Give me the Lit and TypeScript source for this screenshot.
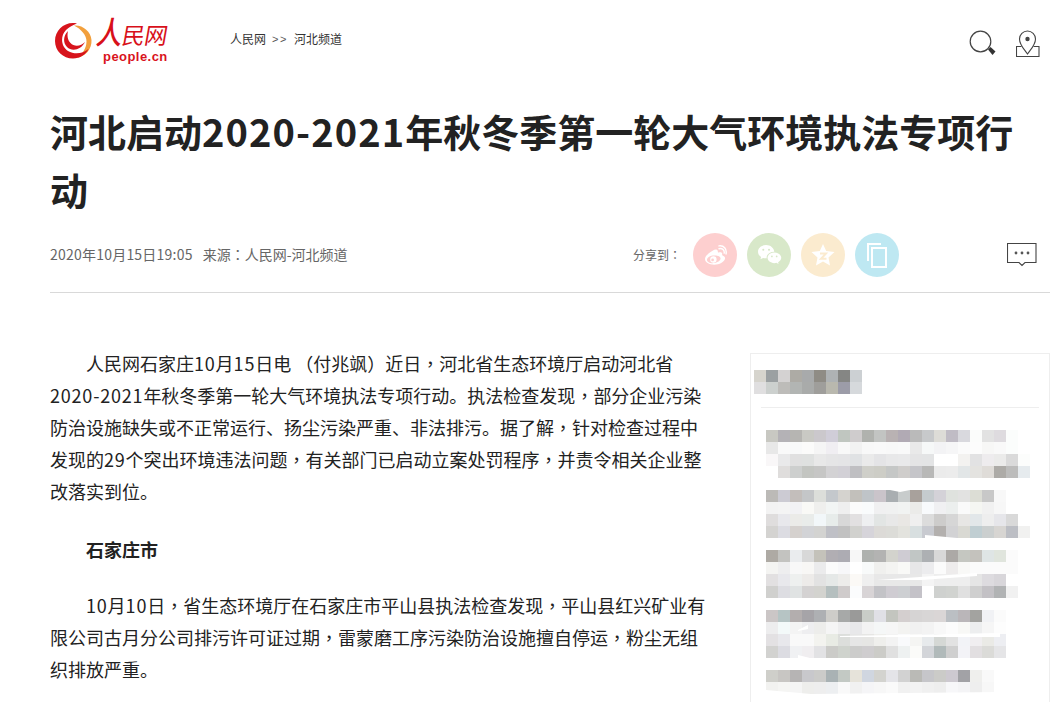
import { LitElement, html, css } from "lit";
import { customElement } from "lit/decorators.js";

const SIDE_TITLE = [
  "d6d4cd 9ba0a2 d4d2d2 adaba5 a8aaab 8f8c85 aeb2b4 858684 ccd0d3",
  "e0dfe0 ccd0ce bdbcb9 b2b5b3 a9abaa 9f9e9b b9b8ae 9c9ca8 d6d9dc",
];
const SIDE_ROWS: string[][] = [
  [
    "c8c8c2 b4b2b6 b6b5b2 c9c9c4 cbc8cc d0cdd8 c0c6c0 cfcccd b0b2ae c2c4c2 b9b2b3 b1aab4 bababa c7c9cb dddcd7 c0bcc5 d9d9de fbfcfb e2e2e2 dedbdf fbfdfc",
    "e8e8e8 f9f9f9 f8f9f9 fbfbfa f5f5f5 f0eef2 f8f8f8 f2f2f2 f8f8f8 f9f9f9 f8f8f8 f9f9f9 e9e9e9 f6f8f8 f3f3f5 f6f6f7 fbfbfb fcfcfc f7f7f6 f9f9f9 fbfdfc",
    "f9f7f8 e9e9ea e0e0e0 dfe1e0 e8e8e8 e5e5e6 e4e4e6 e0e2e4 eaeaea e4e4e6 e8e8e9 e9e9ea e4e4e5 e3e4e5 ffffff ffffff f3f2f0 e2e2e3 eeecee ebebea dadada fcfdfc",
    "ffffff dfdddc cdcfce c3c5c1 c6c6c5 d3d2d4 d2d0d6 bfbfc2 cfcfc9 cdcdc6 c5c7c6 cfcdcb c5c5c9 b8b8b7 ebebeb ececec e2e6e7 e4e3e0 dfdcd8 adaba7 bcbcbb e6ebee",
  ],
  [
    "bcbab7 cccbd3 c3bebb c4c6c8 dcdeda c4c8cc d5d3cf c2c0bb bfc4c8 cac4ca a9aeb1 c8cccc a8a19c c5cbce d4d2d8 dfe2de e2e2e1 dcddd5 c8c8c8 f8f8f8",
    "f3f3f3 f4f4f4 f2f2f4 f9f9f6 efefed f2f5f4 efefef fbfbfb f9fbfc f0f0f1 f0f1f1 f1f3f2 ebebe9 f8fafc f0f0f2 ecefee fafafa f5f6f2 f1f1f1 f7f7f7",
    "dfdddd e8e8ec ebebe8 e9ecea f2f7f9 e7ecea d8d8d8 e2e0e1 eeeff1 e2e5e4 e8e8e8 e9e7e4 efefef dcdcdc cdcccb d6d6d6 e7e6e4 e2e7e9 eeeeee e6e6ea d9d9d9",
    "d4d3d1 dcdce2 d5d1ce d2d3d6 d3d3d1 bfc0c6 c1c1c1 d1d1ce d6d4da dcdad7 dcdcd8 e3e3de d8dfe0 c8cad0 b3b0ae d2d2d4 d9d9d3 c0ced2 cbcfcf d7d5d2 bcbec4 f1f1f0",
  ],
  [
    "aeaaa4 c3c3c0 eaecee d8d8d8 c4c2ba b1aeb3 adacb3 f7f7f7 aeb1ae b3b3b2 d3d3cd cfccd3 c1c6c5 adb0b3 d8d8d8 aca9a6 c5c7c1 c4c2bd dfe5e5 e0e5dd fbfbfb",
    "f4f4f2 eeeeef f8f8f8 f8f7f5 ebebec fbfbfb f7f7f9 ffffff f8fafa f0f0ee f4f4f2 f9f9f7 e7e7e8 ececee fbfbfb eeecec f9f9f7 fbfbfb fbfbfb fbfbfb fbfbfb",
    "e2e0e1 e8e8ec eef0ef edebe9 e2e2e2 e5e8e7 edecea fbf9f6 efefef e8e8e8 e8e8e8 e8e8e8 e8e8e8 f4f4f4 eeeeee eeeeee eeeeee e5e5e5 dddbdf d8d6da ffffff",
    "d0d0ce dddde2 e0e3e3 d4d2d2 d3d3cf b5bfbf cfcbcb fbfcfd d8d4d6 c3c3c7 cfccd2 cdcfd2 c4c2c8 ffffff cfd1cf d1d3d0 e0e0e0 cfcfcf c3c1c5 b1b3b4 f1f1f1",
  ],
  [
    "cbc6c6 b6c4c4 b3aeae a6a4a8 aeb0b3 cecdc9 a7a9a8 9a9a99 c9cdc8 e0e0e6 c3c5bf d4cfcf d6d4d4 d8d6d6 dad6d6 bbbfc3 bab6b9 a3a3a0 f1f2f5 fbfbfb",
    "ededee f3f9f9 f4f4f4 eeeef0 ededeb f5f5f5 ededee e8e8ea f3f3f3 f5f7f7 f6f6f6 f3f3f1 f1f1f1 f3f3f3 f8f8f8 fcfcfc f8f8f6 edeeef f6f6f6 fdfdfd",
    "e3e1e3 e8e8ec f9f9f9 f9f9f9 f3f3ef e8ebe4 dcdedb e6e6e6 e6e6e4 efefec f3f3f3 f9fafc f5f5f3 e7eaec d5d8d5 e2e2e2 f2f3f7 f0eef0 eaeae6 edeef2",
    "d2d2d0 dcdce2 f0f1f3 f0eef0 e2e2e4 cbcbc8 cfd3cd cccccb cfcdcf ccccc8 e0e0e0 eef1f1 fbfbf9 d3d5d9 b1baba cfcfcf f3f3f7 e2dfe1 dbdbd8 e5e5e7",
  ],
  [
    "cfcfca c8c6c3 b6b4b4 c8c8cc cbcbc9 a9b2b4 c3c9c4 e6e3da d0d6e0 d3d3cf e4e4e8 d2d2d2 babab6 c6c6ca cbcbc8 cdc9d0 a2a2a6 efefed f9f9f9",
    "f2f2f0 f5f5f3 f5f5f5 eeeeec eeeeee edeff1 f9f9f9 f1f1f1 f5f5f7 f7f7f7 fafafa f1f1f1 f3f3f3 f0f0f0 eeeeee f7f7f9 f4f4f6 eeeeee f7f7f7",
  ],
];

const PARA_1 = [
  "人民网石家庄10月15日电 （付兆飒）近日，河北省生态环境厅启动河北省",
  "2020-2021年秋冬季第一轮大气环境执法专项行动。执法检查发现，部分企业污染",
  "防治设施缺失或不正常运行、扬尘污染严重、非法排污。据了解，针对检查过程中",
  "发现的29个突出环境违法问题，有关部门已启动立案处罚程序，并责令相关企业整",
  "改落实到位。",
];
const PARA_2 = [
  "10月10日，省生态环境厅在石家庄市平山县执法检查发现，平山县红兴矿业有",
  "限公司古月分公司排污许可证过期，雷蒙磨工序污染防治设施擅自停运，粉尘无组",
  "织排放严重。",
];

// Wrap digit runs and centred full-width punctuation so each can get its own metrics.
function fmt(text: string) {
  return text.split(/([0-9][0-9\-:]*|[，：（）])/).map((part, i) => {
    if (i % 2 === 0) return part;
    return /[0-9]/.test(part) ? html`<span class="n">${part}</span>` : html`<span class="p">${part}</span>`;
  });
}
const lines = (ls: string[]) => ls.map((l) => html`<span class="ln">${fmt(l)}</span>`);

@customElement("mosaic-rows")
class MosaicRows extends LitElement {
  static properties = { rows: { attribute: false } };
  rows: string[] = [];
  static styles = css`
    :host { display: block; }
    .r { display: flex; height: 12px; }
    .c { width: 12px; height: 12px; flex: none; }
  `;
  render() {
    return this.rows.map(
      (r) => html`<div class="r">${r.split(" ").map((c) => html`<div class="c" style="background:#${c}"></div>`)}</div>`
    );
  }
}

@customElement("app-root")
export class AppRoot extends LitElement {
  static styles = css`
    :host {
      display: block;
      width: 1052px;
      height: 702px;
      overflow: hidden;
      background: #fff;
      color: #222;
      font-family: "Noto Sans CJK SC", "Liberation Sans", sans-serif;
      text-spacing-trim: space-all;
    }
    .p { font-family: "Noto Sans CJK TC", "Noto Sans CJK SC", sans-serif; }
    .ln { display: block; white-space: pre; }
    .page { padding-left: 50px; width: 1000px; }
    .head { display: flex; align-items: flex-start; height: 100px; }
    .logo { display: flex; width: 180px; height: 44px; flex: none; margin-top: 21px; margin-left: 5px; }
    .logo svg { flex: none; margin-top: 1px; }
    .logoText { display: flex; flex-direction: column; margin-left: 4px; white-space: nowrap; }
    .lt1 { font-size: 23px; line-height: 30px; font-weight: 400; transform: skewX(-10deg); color: #d8101a; height: 30px; display: flex; align-items: flex-end; margin-top: -2px; letter-spacing: -0.5px; }
    .lt1 b { display: inline-block; font-size: 26px; font-weight: 500; line-height: 30px; transform: scaleY(1.2); transform-origin: 50% 100%; }
    .lt2 { font-size: 13px; line-height: 14px; font-weight: 700; font-family: "Liberation Sans", sans-serif; margin-top: 1px; margin-left: 6px; letter-spacing: 0.45px; color: #d9131c; }
    .crumb { font-size: 12px; line-height: 16px; color: #333; margin-top: 31px; margin-left: -5px; display: flex; gap: 6px; white-space: nowrap; }
    .crumb .sep { font-family: "Liberation Sans", sans-serif; color: #555; font-size: 11px; letter-spacing: 1.6px; }
    .tools { margin-left: auto; display: flex; gap: 20px; margin-top: 29px; padding-right: 10px; }
    h1 { margin: 2px 0 0; font-size: 38px; line-height: 58px; font-weight: 700; color: #222; }
    h1 .n { letter-spacing: 1.1px; }
    .meta { display: flex; align-items: center; height: 44px; margin-top: 15px; font-size: 14px; color: #666; }
    .date { white-space: nowrap; letter-spacing: 0.22px; margin-bottom: 2px; }
    .src { margin-left: 10px; white-space: nowrap; margin-bottom: 2px; }
    .share { margin-left: auto; display: flex; align-items: center; gap: 10px; }
    .share .lbl { font-size: 12px; color: #666; margin-right: 2px; margin-bottom: 2px; white-space: nowrap; }
    .dot { width: 44px; height: 44px; border-radius: 50%; display: flex; align-items: center; justify-content: center; }
    .dot svg { display: block; }
    .d1 { background: #fdcfcf; } .d2 { background: #d8e8c9; } .d3 { background: #fbebcf; } .d4 { background: #bee8f2; }
    .cmt { margin-left: 98px; margin-right: 13px; display: flex; }
    .rule { height: 1px; background: #d9d9d9; margin-top: 15px; }
    .cols { display: flex; margin-top: 54px; align-items: flex-start; }
    .article { width: 654px; flex: none; font-size: 18px; line-height: 32px; color: #222; }
    .article p { margin: 0 0 26px; }
    .article .ln:first-child { padding-left: 36px; }
    .article .n { letter-spacing: 0.8px; }
    .article p.s { font-weight: 700; margin-bottom: 24px; }
    .aside { position: relative; margin-left: 46px; margin-top: 6px; width: 295px; height: 400px; flex: none; border: 1px solid #eeeeee; border-bottom: 0; padding: 16px 0 0 3px; }
    .side-line { height: 1px; background: #eeeeee; margin: 13px 10px 0 7px; }
    .side-body { margin: 22px 0 0 12px; display: flex; flex-direction: column; gap: 12px; }
    .tears { position: absolute; left: 0; top: 0; display: block; }
  `;

  render() {
    return html`
      <div class="page">
        <header class="head">
          <div class="logo">
            <svg width="38" height="38" viewBox="0 0 38 38">
              <path d="M19 3.500 C27 2.500 36 9 36.500 18 C37 27 31 34 22 36 C27 32 31.500 26.500 31.500 19.500 C31.500 13 26 7 19 3.500Z" fill="#f2a03d"/>
              <path d="M22 1.500 C10 -1 0 8 0 19 C0 29 8 36.500 18 36.500 C25 36.500 31 32.500 33.500 27 C28 31.500 20 33 13 29 C6 25 5 14 11 8 C14 5 18 3 22 1.500Z" fill="#d7141c"/>
              <path d="M13 9 C8 14 8 21 12 25 C17 30 26 28 30 20 C26 24.500 19 25 15.500 21 C12.500 18 12 13 13 9Z" fill="#d7141c"/>
            </svg>
            <div class="logoText">
              <span class="lt1"><b>人</b>民网</span>
              <span class="lt2">people.cn</span>
            </div>
          </div>
          <nav class="crumb"><span>人民网</span><span class="sep">&gt;&gt;</span><span>河北频道</span></nav>
          <div class="tools">
            <svg width="28" height="28" viewBox="0 0 28 28" fill="none">
              <circle cx="12.500" cy="12.500" r="10.300" stroke="#444" stroke-width="1.200"/>
              <path d="M20 20.500 L22.500 18 L27.500 22.500 L24.500 26Z" fill="#333"/>
            </svg>
            <svg width="24" height="29" viewBox="0 0 24 29" fill="none">
              <path d="M11.500 25 C8 20 3.500 16 3.500 10 A8 8 0 0 1 19.500 10 C19.500 16 15 20 11.500 25Z" stroke="#444" stroke-width="1.100" fill="#fff"/>
              <circle cx="11.500" cy="10" r="2.200" fill="#444"/>
              <path d="M5.500 17.500 H0.500 V27.500 H23 V17.500 H17.500" stroke="#444" stroke-width="1.100"/>
            </svg>
          </div>
        </header>
        <h1><span class="ln">${fmt("河北启动2020-2021年秋冬季第一轮大气环境执法专项行")}</span><span class="ln">动</span></h1>
        <div class="meta">
          <span class="date">2020年10月15日19:05</span>
          <span class="src">来源<span class="p">：</span>人民网-河北频道</span>
          <div class="share">
            <span class="lbl">分享到<span class="p">：</span></span>
            <span class="dot d1">
              <svg width="24" height="21" viewBox="0 0 30 26" fill="none">
                <path fill-rule="evenodd" d="M12 7 C15 5 18 5 18.500 7.500 C18.700 9 18.300 9.500 19.500 9.200 C22.500 8.200 24.500 9.500 24 11.500 C23.700 12.500 24 12.800 25 13.200 C27 14 28 15.500 27.500 17 C26.500 21 20.500 24.500 14 24.500 C7.500 24.500 2.500 21.800 2.500 17.500 C2.500 14 6.500 10 12 7Z M14 13 C9 13 5 15.500 5 18.500 C5 21 9 23 13.500 22.500 C18 22.200 22 19.500 22 16.800 C22 14.300 18.500 12.800 14 13Z" fill="#fff"/>
                <circle cx="13" cy="18" r="4" fill="#fff"/><circle cx="12" cy="18.500" r="1.700" fill="#fdcfcf"/>
                <path d="M20 4.500 C24 3.500 27 6 26.500 10 M20 1 C26 0 30 5 28.800 11" stroke="#fff" stroke-width="1.800" stroke-linecap="round"/>
              </svg>
            </span>
            <span class="dot d2">
              <svg width="25" height="22" viewBox="0 0 26 23">
                <path d="M9.500 1 C4.500 1 1 4.300 1 8 C1 10.300 2.300 12.300 4.200 13.500 L3.500 16 L6.300 14.600 C7.300 14.900 8.300 15 9.500 15 L10 15 C9.700 11 13 8 18 8 C17.500 4 14 1 9.500 1Z" fill="#fff"/>
                <path d="M18 9 C14 9 11 11.500 11 14.500 C11 17.500 14 20 18 20 C18.800 20 19.500 19.900 20.200 19.700 L22.500 21 L22 19 C24 18 25.300 16.300 25.300 14.500 C25.300 11.500 22 9 18 9Z" fill="#fff"/>
                <circle cx="6.500" cy="6" r="1.100" fill="#d8e8c9"/><circle cx="12.500" cy="6" r="1.100" fill="#d8e8c9"/>
                <circle cx="15.500" cy="13" r="0.900" fill="#d8e8c9"/><circle cx="20.500" cy="13" r="0.900" fill="#d8e8c9"/>
              </svg>
            </span>
            <span class="dot d3">
              <svg width="24" height="24" viewBox="0 0 24 24">
                <path d="M12 1 L15.200 8 L23.500 9 L17.500 14.500 L19 22.500 L12 18.500 L5 22.500 L6.500 14.500 L0.500 9 L8.800 8Z" fill="#fff"/>
                <path d="M9 10.500 H15 L10 15.800 H15.500" stroke="#fbebcf" stroke-width="2" fill="none"/>
              </svg>
            </span>
            <span class="dot d4">
              <svg width="20" height="25" viewBox="0 0 20 25" fill="none">
                <path d="M1 18 V1 H14" stroke="#fff" stroke-width="2"/>
                <rect x="5" y="5" width="14" height="19" stroke="#fff" stroke-width="2"/>
              </svg>
            </span>
            <span class="cmt">
              <svg width="30" height="24" viewBox="0 0 30 24" fill="none">
                <path d="M0.500 0.500 H29 V19.500 H18 L15 22.500 L12 19.500 H0.500Z" stroke="#444" stroke-width="1.100"/>
                <circle cx="9" cy="10" r="1.400" fill="#555"/><circle cx="15" cy="10" r="1.400" fill="#555"/><circle cx="21" cy="10" r="1.400" fill="#555"/>
              </svg>
            </span>
          </div>
        </div>
        <div class="rule"></div>
        <div class="cols">
          <article class="article">
            <p>${lines(PARA_1)}</p>
            <p class="s"><span class="ln">石家庄市</span></p>
            <p>${lines(PARA_2)}</p>
          </article>
          <aside class="aside">
            <mosaic-rows .rows=${SIDE_TITLE}></mosaic-rows>
            <div class="side-line"></div>
            <div class="side-body">
              ${SIDE_ROWS.map((rows) => html`<mosaic-rows .rows=${rows}></mosaic-rows>`)}
            </div>
            <svg class="tears" width="298" height="349" viewBox="0 0 298 349" fill="#fff">
              <path d="M139 136 H159 L149 138Z"/>
              <path d="M174 181 L206 184 L174 185Z"/>
              <path d="M126 226 L226 219 L226 222 L170 226Z"/>
              <path d="M47 276 L57 271 L57 275 L47 277Z"/>
              <path d="M89 282 L249 279 L249 283 L89 283Z"/>
              <path d="M47 301 L59 304 L47 305Z"/>
              <path d="M15 336 L60 340 L250 338 L298 349 L15 349Z"/>
            </svg>
          </aside>
        </div>
      </div>
    `;
  }
}
void MosaicRows;
